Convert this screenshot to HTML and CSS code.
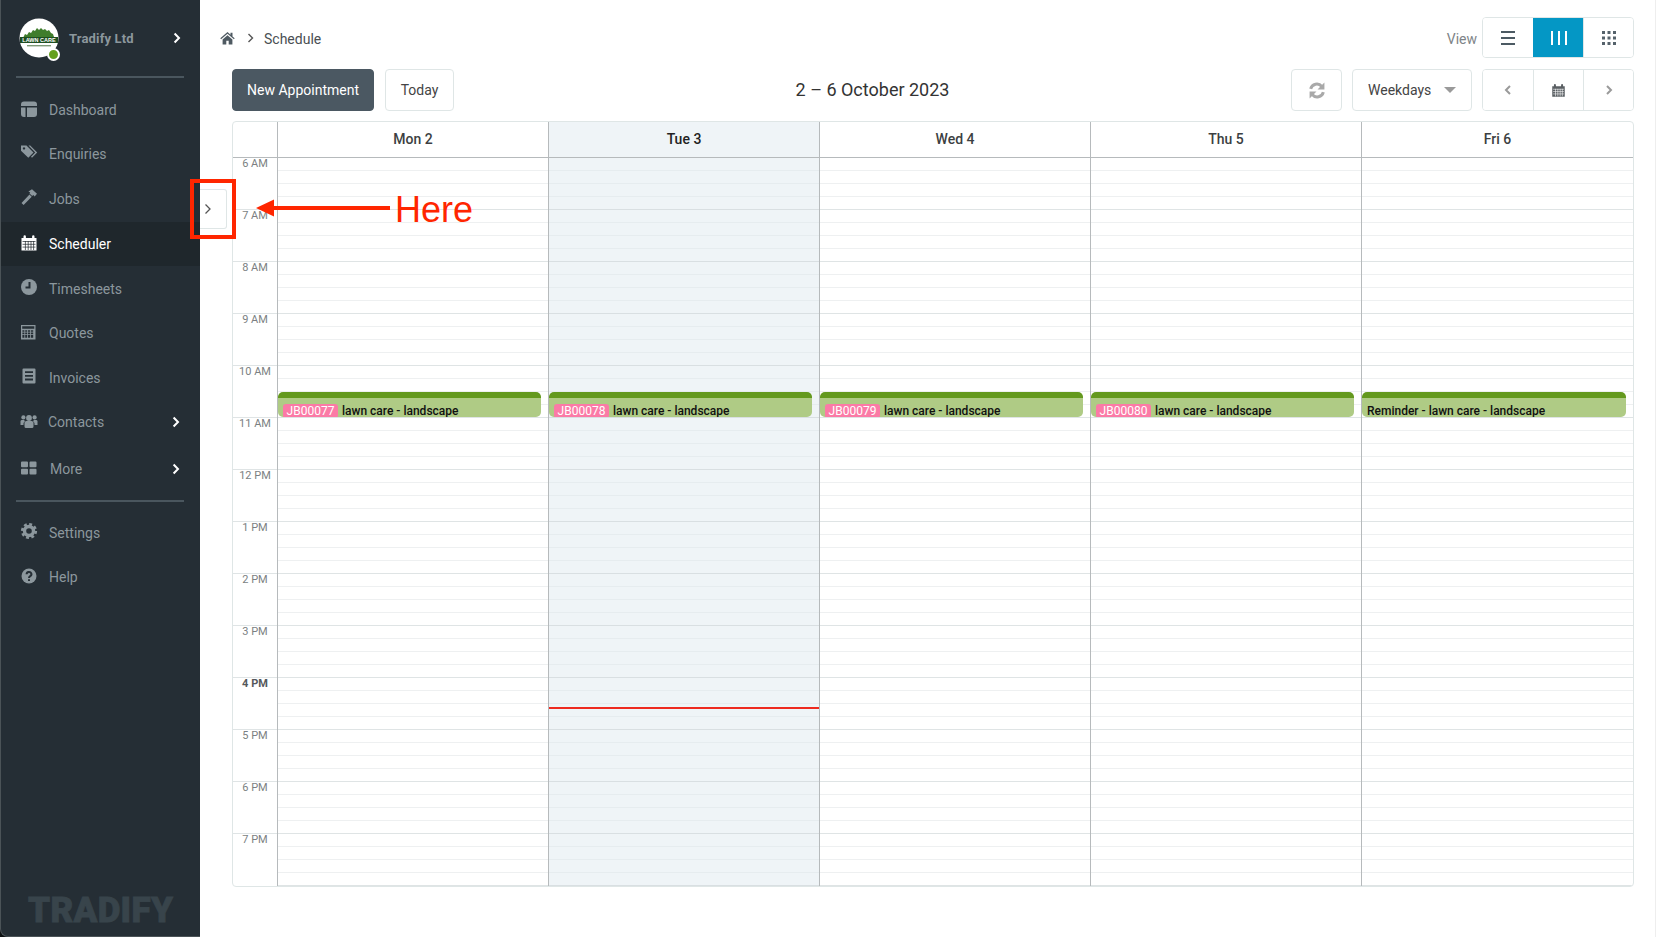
FILE: index.html
```html
<!DOCTYPE html>
<html lang="en">
  <head>
    <meta charset="UTF-8" />
    <meta name="viewport" content="width=device-width, initial-scale=1.0" />
    <title>Schedule</title>
    <link rel="stylesheet" href="styles.css">
  </head>
  <body>
    <div class="side-frame">
      <aside class="sidebar">
        <div class="account">
          <div class="logo">
            <svg width="40" height="40" viewBox="0 0 40 40">
              <circle cx="20" cy="20" r="19.5" fill="#fff" />
              <path d="M4 20l2-4 2 1 2-3 2 1 2-3 2 1 2-3 2 2 2-2 2 2 2-1 2 2 2-1 2 3 2 1 2 6z" fill="#3f7d2c" />
              <rect x="1" y="19" width="38" height="6" fill="#1f4f22" />
              <text x="20" y="24" class="logo-text">LAWN CARE</text>
              <rect x="8" y="27" width="24" height="1.4" fill="#7f9a78" />
            </svg>
            <span class="logo-dot"></span>
          </div>
          <span class="account-name">Tradify Ltd</span>
          <svg class="chev-white" width="8" height="12" viewBox="0 0 8 12"><path d="M1.6 1.5L6 6l-4.4 4.5" /></svg>
        </div>
        <hr class="side-rule" />
        <nav class="menu">
          <a class="menu-item">
            <svg class="mi" width="18" height="18" viewBox="0 0 18 18"><path d="M1 4.500a3 3 0 0 1 3-3h10a3 3 0 0 1 3 3V6H1zM1 7.500h4.500V17H4a3 3 0 0 1-3-3zM7 7.500h10V14a3 3 0 0 1-3 3H7z" /></svg>
            <span>Dashboard</span>
          </a>
          <a class="menu-item enquiries">
            <svg class="mi" width="18" height="18" viewBox="0 0 18 18"><path fill-rule="evenodd" d="M1 1.500h5.500l7 7-5.200 5.200-7.300-7zM4 3.200a1.200 1.200 0 1 0 .01 0z" /><path d="M8.500 1.500h1.700l7 7-5.200 5.200-1-1 4.200-4.200z" /></svg>
            <span>Enquiries</span>
          </a>
          <a class="menu-item">
            <svg class="mi" width="18" height="18" viewBox="0 0 18 18"><path d="M1.500 14l8-8.500 2.200 2.200L3.600 16zM8.400 2.600L12 .2l5 4.600-2.300 2.600-1.500-1.300-1 1-2.700-2.700.7-.8z" /></svg>
            <span>Jobs</span>
          </a>
          <a class="menu-item active">
            <svg class="mi" width="18" height="18" viewBox="0 0 18 18"><path d="M1.500 4h2V2.500a1.200 1.200 0 0 1 2.400 0V4h6.200V2.500a1.200 1.200 0 0 1 2.400 0V4h2v12.500h-15z" /><path class="cal-lines" d="M2.500 7.500h13M2.500 10.300h13M2.500 13.100h13M5.400 7v9M8.200 7v9M11 7v9M13.600 7v9" /></svg>
            <span>Scheduler</span>
          </a>
          <a class="menu-item">
            <svg class="mi" width="18" height="18" viewBox="0 0 18 18"><circle cx="9" cy="9" r="8" /><path class="clock-hand" d="M9.500 4v5.500H5.500" /></svg>
            <span>Timesheets</span>
          </a>
          <a class="menu-item">
            <svg class="mi" width="18" height="18" viewBox="0 0 18 18"><path fill-rule="evenodd" d="M1 2h14.500v14.500H1zM2.200 3.200v2.600h12.100V3.200zM2.400 7.200v1.600h2V7.200zM5.200 7.200v1.600h2V7.200zM8 7.200v1.600h2V7.200zM10.800 7.200v1.600h2.400V7.200zM2.400 9.600v1.600h2V9.600zM5.200 9.600v1.600h2V9.600zM8 9.600v1.600h2V9.600zM10.800 9.600v1.600h2.400V9.600zM2.400 12v2.800h2V12zM5.200 12v2.800h2V12zM8 12v2.800h2V12zM10.800 12v2.800h2.400V12z" /></svg>
            <span>Quotes</span>
          </a>
          <a class="menu-item">
            <svg class="mi" width="18" height="18" viewBox="0 0 18 18"><path fill-rule="evenodd" d="M3.500 1.500h11a1 1 0 0 1 1 1v13a1 1 0 0 1-1 1h-11a1 1 0 0 1-1-1v-13a1 1 0 0 1 1-1zM5 4.200V6h8V4.200zM5 7.900v1.800h8V7.900zM5 11.600v1.800h8v-1.800z" /></svg>
            <span>Invoices</span>
          </a>
          <a class="menu-item tight">
            <svg class="mi" width="18" height="18" viewBox="0 0 18 18"><circle cx="9" cy="6" r="2.900" /><circle cx="3.400" cy="5.400" r="2.100" /><circle cx="14.600" cy="5.400" r="2.100" /><path d="M4.500 10.500a2 2 0 0 1 2-1.500h5a2 2 0 0 1 2 1.500v4a1.500 1.500 0 0 1-1.500 1.500H6a1.500 1.500 0 0 1-1.500-1.500zM.5 9A1.500 1.500 0 0 1 2 8h2.200a3 3 0 0 0 .8 1.200 3 3 0 0 0-1.500 2.300V13H.5zM17.500 9A1.500 1.500 0 0 0 16 8h-2.200a3 3 0 0 1-.8 1.200 3 3 0 0 1 1.500 2.300V13h3z" /></svg>
            <span>Contacts</span>
            <svg class="chev-white" width="8" height="12" viewBox="0 0 8 12"><path d="M1.600 1.500L6 6l-4.400 4.500" /></svg>
          </a>
          <a class="menu-item wide">
            <svg class="mi" width="18" height="18" viewBox="0 0 18 18"><path d="M1 3.500a1 1 0 0 1 1-1h5a1 1 0 0 1 1 1v3.700a1 1 0 0 1-1 1H2a1 1 0 0 1-1-1zM9.500 3.500a1 1 0 0 1 1-1h5a1 1 0 0 1 1 1v3.700a1 1 0 0 1-1 1h-5a1 1 0 0 1-1-1zM1 10.800a1 1 0 0 1 1-1h5a1 1 0 0 1 1 1v3.700a1 1 0 0 1-1 1H2a1 1 0 0 1-1-1zM9.500 10.800a1 1 0 0 1 1-1h5a1 1 0 0 1 1 1v3.700a1 1 0 0 1-1 1h-5a1 1 0 0 1-1-1z" /></svg>
            <span>More</span>
            <svg class="chev-white" width="8" height="12" viewBox="0 0 8 12"><path d="M1.600 1.500L6 6l-4.400 4.500" /></svg>
          </a>
        </nav>
        <hr class="side-rule rule-low" />
        <nav class="menu">
          <a class="menu-item">
            <svg class="mi" width="18" height="18" viewBox="0 0 18 18"><circle class="gear-ring" cx="9" cy="9" r="4.500" /><circle class="gear-teeth" cx="9" cy="9" r="6.800" /></svg>
            <span>Settings</span>
          </a>
          <a class="menu-item">
            <svg class="mi" width="18" height="18" viewBox="0 0 18 18"><circle cx="9" cy="9" r="7.500" /><path class="clock-hand" d="M6.600 7.200a2.400 2.200 0 1 1 3.600 1.900c-.8.500-1.200.9-1.200 1.800M9 12.300v1.800" /></svg>
            <span>Help</span>
          </a>
        </nav>
        <div class="watermark">TRADIFY</div>
      </aside>
    </div>

    <main class="content">
      <div class="topbar">
        <div class="crumbs">
          <svg class="home-icon" width="15" height="14" viewBox="0 0 15 14"><path d="M7.500 1L.3 7.300l.8.900L7.500 2.700l6.400 5.500.8-.9L12.500 5.400V1.800h-2v1.900zM2.600 8.500v5h3.700V9.700h2.400v3.800h3.700v-5L7.500 4.200z" /></svg>
          <svg class="crumb-chev" width="7" height="10" viewBox="0 0 7 10"><path d="M1.500 1l4 4-4 4" /></svg>
          <span>Schedule</span>
        </div>
        <div class="view-switch">
          <span class="view-label">View</span>
          <div class="btn-group">
            <button class="icon-btn">
              <svg width="16" height="16" viewBox="0 0 16 16"><path class="bars dark" d="M1 2h14M1 8h14M1 14h14" /></svg>
            </button>
            <button class="icon-btn selected">
              <svg width="16" height="16" viewBox="0 0 16 16"><path class="bars light" d="M1 1v14M8 1v14M15 1v14" /></svg>
            </button>
            <button class="icon-btn">
              <svg width="16" height="16" viewBox="0 0 16 16"><path d="M1 1h3v3H1zM6.500 1h3v3h-3zM12 1h3v3h-3zM1 6.500h3v3H1zM6.500 6.500h3v3h-3zM12 6.500h3v3h-3zM1 12h3v3H1zM6.500 12h3v3h-3zM12 12h3v3h-3z" fill="#55626b" /></svg>
            </button>
          </div>
        </div>
      </div>

      <div class="toolbar">
        <div class="tool-left">
          <button class="btn primary">New Appointment</button>
          <button class="btn today-btn">Today</button>
        </div>
        <div class="range-title">2 – 6 October 2023</div>
        <div class="tool-right">
          <button class="btn square">
            <svg width="18" height="17" viewBox="0 0 17 16"><path class="refresh" d="M2.500 6.500A6 6 0 0 1 13 4.200M14.500 9.500A6 6 0 0 1 4 11.800" /><path d="M15.500 .5v6.500H9zM1.500 15.500V9H8z" fill="#a9a9a9" /></svg>
          </button>
          <button class="btn select">
            <span>Weekdays</span>
            <span class="caret"></span>
          </button>
          <div class="btn-group short">
            <button class="icon-btn">
              <svg width="8" height="10" viewBox="0 0 8 10"><path class="nav-chev" d="M6 1L2 5l4 4" /></svg>
            </button>
            <button class="icon-btn">
              <svg width="15" height="15" viewBox="0 0 18 18"><path d="M1.500 4h2V2.500a1.200 1.200 0 0 1 2.400 0V4h6.200V2.500a1.200 1.200 0 0 1 2.400 0V4h2v12.500h-15z" fill="#5a5f63" /><path class="cal-lines white" d="M2.500 7.500h13M2.500 10.300h13M2.500 13.100h13M5.400 7v9M8.200 7v9M11 7v9M13.600 7v9" /></svg>
            </button>
            <button class="icon-btn">
              <svg width="8" height="10" viewBox="0 0 8 10"><path class="nav-chev" d="M2 1l4 4-4 4" /></svg>
            </button>
          </div>
        </div>
      </div>

      <section class="calendar">
        <div class="cal-head">
          <div class="head-gutter"></div>
          <div class="head-day">Mon 2</div>
          <div class="head-day today">Tue 3</div>
          <div class="head-day">Wed 4</div>
          <div class="head-day">Thu 5</div>
          <div class="head-day">Fri 6</div>
        </div>
        <div class="cal-body">
          <div class="times">
            <div class="hour">6 AM</div>
            <div class="hour">7 AM</div>
            <div class="hour">8 AM</div>
            <div class="hour">9 AM</div>
            <div class="hour">10 AM</div>
            <div class="hour">11 AM</div>
            <div class="hour">12 PM</div>
            <div class="hour">1 PM</div>
            <div class="hour">2 PM</div>
            <div class="hour">3 PM</div>
            <div class="hour now">4 PM</div>
            <div class="hour">5 PM</div>
            <div class="hour">6 PM</div>
            <div class="hour">7 PM</div>
          </div>
          <div class="day">
            <div class="event"><span class="job">JB00077</span> lawn care - landscape</div>
          </div>
          <div class="day today">
            <div class="event"><span class="job">JB00078</span> lawn care - landscape</div>
            <div class="now-line"></div>
          </div>
          <div class="day">
            <div class="event"><span class="job">JB00079</span> lawn care - landscape</div>
          </div>
          <div class="day">
            <div class="event"><span class="job">JB00080</span> lawn care - landscape</div>
          </div>
          <div class="day">
            <div class="event">Reminder - lawn care - landscape</div>
          </div>
        </div>
      </section>
    </main>

    <!-- collapse handle and the red callout sit on top of everything -->
    <div class="collapse-handle">
      <svg width="8" height="12" viewBox="0 0 8 12"><path d="M1.500 1.500L6 6l-4.500 4.500" /></svg>
    </div>
    <div class="callout-box"></div>
    <svg class="callout-arrow" width="136" height="18" viewBox="0 0 136 18"><path d="M0 9L18 .5V7h116v4H18v6.500z" /></svg>
    <div class="callout-text">Here</div>
  </body>
</html>
```

FILE: styles.css
```css
* {
  box-sizing: border-box;
}

html,
body {
  height: 100%;
}

body {
  margin: 0;
  display: flex;
  height: 937px;
  overflow: hidden;
  position: relative;
  background-color: #fff;
  color: #333;
  font-family: Roboto, "Liberation Sans", sans-serif;
  font-size: 14px;
  border-right: 1px solid #eeeeee;
}

button {
  font-family: inherit;
  font-size: 14px;
  color: #444;
  background: #fff;
  cursor: pointer;
}

/* Sidebar */

.side-frame {
  width: 200px;
  flex: none;
  background-color: #0d1012;
}

.sidebar {
  height: 100%;
  display: flex;
  flex-direction: column;
  background-color: #252e35;
  border-left: 1px solid #4b5357;
  border-bottom: 1px solid #4b5357;
  border-bottom-left-radius: 8px;
}

.account {
  height: 76px;
  display: flex;
  align-items: center;
  padding-left: 18px;
  flex: none;
}

.logo {
  position: relative;
  width: 40px;
  height: 40px;
  margin-right: 10px;
}

.logo-text {
  font-family: "Liberation Sans", sans-serif;
  font-size: 5.5px;
  font-weight: 700;
  fill: #fff;
  text-anchor: middle;
}

.logo-dot {
  position: absolute;
  right: -1px;
  bottom: -3px;
  width: 13px;
  height: 13px;
  border-radius: 50%;
  background-color: #64a01f;
  border: 2px solid #fff;
}

.account-name {
  font-size: 13px;
  font-weight: 700;
  letter-spacing: 0.15px;
  color: #8c979d;
  width: 104px;
}

.chev-white {
  fill: none;
  stroke: #fff;
  stroke-width: 2;
}

.side-rule {
  margin: 0 16px 0 15px;
  border: none;
  border-top: 2px solid #4a565e;
  flex: none;
}

.rule-low {
  margin-top: 9px;
  margin-bottom: 8px;
}

.menu {
  flex: none;
}

.side-rule + .menu {
  padding-top: 10px;
}

.rule-low + .menu {
  padding-top: 0;
}

.menu-item {
  height: 44.6px;
  display: flex;
  align-items: center;
  padding-left: 19px;
  color: #8c979d;
}

.menu-item span {
  margin-left: 11px;
  width: 123px;
}

.menu-item.enquiries span {
  margin-top: -2px;
}

.menu-item.tight span {
  margin-left: 10px;
  width: 124px;
}

.menu-item.wide {
  margin-top: 2px;
}

.menu-item.wide span {
  margin-left: 12px;
  width: 122px;
}

.mi {
  fill: #8c979d;
  flex: none;
  margin-top: -3px;
}

.menu-item.active {
  background-color: #1f272c;
  color: #fff;
}

.menu-item.active .mi {
  fill: #fff;
}

.cal-lines {
  fill: none;
  stroke: #1f272c;
  stroke-width: 0.7;
}

.cal-lines.white {
  stroke: #fff;
}

.clock-hand {
  fill: none;
  stroke: #252e35;
  stroke-width: 2;
}

.gear-ring {
  fill: none;
  stroke: #8c979d;
  stroke-width: 3.4;
}

.gear-teeth {
  fill: none;
  stroke: #8c979d;
  stroke-width: 2.6;
  stroke-dasharray: 2.9 2.44;
}

.watermark {
  margin-top: auto;
  padding: 0 0 5px 27px;
  font-size: 35px;
  line-height: 41px;
  font-weight: 900;
  letter-spacing: 0.3px;
  color: #38444b;
  -webkit-text-stroke: 0.8px #38444b;
}

/* Main column */

.content {
  flex: 1;
  min-width: 0;
  padding: 17px 21px 0 32px;
}

.topbar {
  display: flex;
  justify-content: space-between;
  align-items: center;
  height: 41px;
}

.crumbs {
  display: flex;
  align-items: center;
  color: #4a4f53;
  padding-top: 1px;
}

.crumbs span {
  padding-top: 2px;
}

.home-icon {
  fill: #4f5a62;
  margin-left: -12px;
  margin-right: 12px;
}

.crumb-chev {
  fill: none;
  stroke: #555;
  stroke-width: 1.4;
  margin-right: 10px;
}

.view-switch {
  display: flex;
  align-items: center;
}

.view-label {
  color: #7e8488;
  margin-right: 5px;
  padding-top: 2px;
}

.btn-group {
  display: flex;
  width: 152px;
  height: 41px;
  border: 1px solid #dfe6e6;
  border-radius: 4px;
  overflow: hidden;
}

.btn-group.short {
  height: 42px;
}

.icon-btn {
  flex: 1 1 50px;
  border: none;
  border-left: 1px solid #dfe6e6;
  display: flex;
  align-items: center;
  justify-content: center;
  padding: 0;
}

.icon-btn:first-child {
  border-left: none;
}

.icon-btn.selected {
  background-color: #0497c5;
  border-left-color: #0497c5;
}

.bars {
  fill: none;
  stroke-width: 2;
}

.bars.dark {
  stroke: #4c5a63;
}

.bars.light {
  stroke: #fff;
}

.refresh {
  fill: none;
  stroke: #a9a9a9;
  stroke-width: 2.8;
}

.nav-chev {
  fill: none;
  stroke: #9a9a9a;
  stroke-width: 2;
}

.toolbar {
  display: flex;
  justify-content: space-between;
  align-items: center;
  height: 42px;
  margin-top: 11px;
}

.tool-left,
.tool-right {
  display: flex;
  gap: 11px;
}

.tool-right {
  gap: 10px;
}

.btn {
  height: 42px;
  padding: 0 15px;
  border: 1px solid #dfe6e6;
  border-radius: 4px;
}

.btn.primary {
  width: 142px;
  padding: 0;
  background-color: #4b5862;
  border-color: #4b5862;
  color: #fff;
}

.btn.today-btn {
  width: 69px;
  padding: 0;
}

.btn.square {
  width: 51px;
  padding: 0;
  display: flex;
  align-items: center;
  justify-content: center;
}

.btn.select {
  width: 120px;
  display: flex;
  align-items: center;
  justify-content: space-between;
  padding-right: 15px;
}

.caret {
  border-left: 6px solid transparent;
  border-right: 6px solid transparent;
  border-top: 6px solid #9a9a9a;
}

.range-title {
  font-size: 18px;
  color: #333;
  padding-bottom: 2px;
}

/* Calendar */

.calendar {
  margin-top: 10px;
  height: 766px;
  border: 1px solid #dfe6e6;
  border-radius: 4px;
  overflow: hidden;
}

.cal-head {
  display: grid;
  grid-template-columns: 45px repeat(5, 1fr);
  height: 36px;
  border-bottom: 1px solid #b6babc;
}

.head-gutter {
  border-right: 1px solid #b6babc;
}

.head-day {
  display: flex;
  align-items: center;
  justify-content: center;
  padding-bottom: 2px;
  border-right: 1px solid #b6babc;
  font-weight: 500;
  color: #3c3f42;
}

.head-day:last-child {
  border-right: none;
}

.head-day.today {
  background-color: #eff4f7;
  color: #222;
}

.cal-body {
  display: grid;
  grid-template-columns: 45px repeat(5, 1fr);
}

.times {
  border-right: 1px solid #b6babc;
}

.hour {
  height: 52px;
  border-bottom: 1px solid #dfe4e5;
  font-size: 11px;
  line-height: 12px;
  text-align: center;
  color: #7b7f82;
}

.hour:last-child {
  border-bottom: none;
}

.hour.now {
  font-weight: 700;
  color: #55595c;
}

.day {
  position: relative;
  height: 728px;
  border-right: 1px solid #b6babc;
  background-image:
    linear-gradient(to top, #dfe4e5 1px, transparent 1px),
    linear-gradient(to top, #eef0f1 1px, transparent 1px);
  background-size: 100% 52px, 100% 13px;
}

.day:last-child {
  border-right: none;
}

.day.today {
  background-color: #eff4f7;
  background-image:
    linear-gradient(to top, #d9dfe2 1px, transparent 1px),
    linear-gradient(to top, #e6ecef 1px, transparent 1px);
}

.event {
  position: absolute;
  top: 234px;
  left: 0;
  right: 7px;
  height: 25px;
  padding: 6px 0 0 5px;
  overflow: hidden;
  background-color: #afcb85;
  border-top: 6px solid #64991e;
  border-radius: 5px;
  font-size: 12px;
  font-weight: 500;
  line-height: 14px;
  color: #111;
  white-space: nowrap;
}

.job {
  display: inline-block;
  width: 55px;
  margin-right: 1px;
  border-radius: 3px;
  background-color: #fb7aa6;
  color: #fff;
  font-weight: 400;
  text-align: center;
}

.now-line {
  position: absolute;
  top: 549px;
  left: 0;
  right: 0;
  height: 2px;
  background-color: #ee2a1f;
}

/* Overlays */

.collapse-handle {
  position: absolute;
  left: 200px;
  top: 189px;
  width: 27px;
  height: 40px;
  display: flex;
  align-items: center;
  padding-left: 4px;
  background-color: #fff;
  border: 1px solid #dfe6e6;
  border-left: none;
  border-radius: 0 3px 3px 0;
}

.collapse-handle svg {
  fill: none;
  stroke: #555;
  stroke-width: 1.3;
}

.callout-box {
  position: absolute;
  left: 190px;
  top: 179px;
  width: 46px;
  height: 60px;
  border: 4px solid #ff2600;
}

.callout-arrow {
  position: absolute;
  left: 256px;
  top: 199px;
  fill: #ff2600;
}

.callout-text {
  position: absolute;
  left: 395px;
  top: 190px;
  font-family: "Liberation Sans", sans-serif;
  font-size: 36px;
  line-height: 40px;
  color: #ff2600;
}
```
